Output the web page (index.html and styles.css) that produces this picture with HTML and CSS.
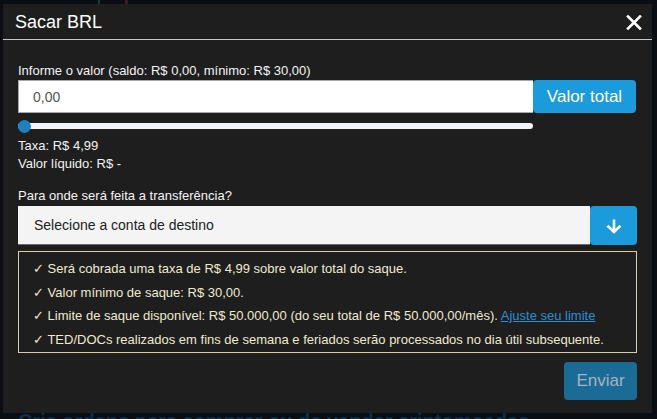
FILE: index.html
```html
<!DOCTYPE html>
<html>
    <head>
        <title>Sacar BRL</title>
        <link rel="stylesheet" href="styles.css">
    </head>
    <body>
        <div class='page'>
            <div class='chartStrip'></div>
            <h2 class='pageTitle'>Crie ordens para comprar ou de vender criptomoedas</h2>
        </div>

        <div class='modal'>
            <div class='modalHeader'>
                <span class='modalTitle'>Sacar BRL</span>
                <svg class='closeIcon' width='16' height='15' viewBox='0 0 16 15'>
                    <path d='M2 1.5 L14 13.5 M14 1.5 L2 13.5' stroke='#fff' stroke-width='2.6' stroke-linecap='square'/>
                </svg>
            </div>

            <div class='modalBody'>
                <div class='fieldLabel'>Informe o valor (saldo: R$ 0,00, mínimo: R$ 30,00)</div>
                <div class='amountRow'>
                    <div class='amountInput'>0,00</div>
                    <div class='btnBlue btnTotal'>Valor total</div>
                </div>
                <div class='slider'>
                    <div class='sliderTrack'></div>
                    <div class='sliderThumb'></div>
                </div>
                <div class='summary'>
                    <div>Taxa: R$ 4,99</div>
                    <div>Valor líquido: R$ -</div>
                </div>

                <div class='fieldLabel destLabel'>Para onde será feita a transferência?</div>
                <div class='destRow'>
                    <div class='destSelect'>Selecione a conta de destino</div>
                    <div class='btnBlue btnArrow'>
                        <svg width='18' height='16' viewBox='0 0 18 16'>
                            <path d='M9 1.5 V14 M2.5 7.8 L9 14 L15.5 7.8' stroke='#fff' stroke-width='2.6' fill='none'/>
                        </svg>
                    </div>
                </div>

                <div class='notes'>
                    <div>✓ Será cobrada uma taxa de R$ 4,99 sobre valor total do saque.</div>
                    <div>✓ Valor mínimo de saque: R$ 30,00.</div>
                    <div>✓ Limite de saque disponível: R$ 50.000,00 (do seu total de R$ 50.000,00/mês). <a href='#'>Ajuste seu limite</a></div>
                    <div>✓ TED/DOCs realizados em fins de semana e feriados serão processados no dia útil subsequente.</div>
                </div>

                <div class='footer'>
                    <div class='btnSend'>Enviar</div>
                </div>
            </div>
        </div>
    </body>
</html>
```

FILE: styles.css
```css
body
{
    margin: 0px;
    background-color: #0a0d12;
    font-family: "Liberation Sans", Arial, sans-serif;
    overflow: hidden;
}

.page
{
    width: 657px;
    height: 419px;
}

.chartStrip
{
    height: 4px;
    margin-left: 48px;
    width: 110px;
    background: linear-gradient(90deg, #0a0d12 0px, #0a0d12 50px, #1b3a2a 50px, #1b3a2a 52px, #0a0d12 52px, #0a0d12 77px, #3a1a1e 77px, #3a1a1e 80px, #0a0d12 80px);
}

.pageTitle
{
    margin: 406px 0px 0px 18px;
    font-size: 20px;
    font-weight: bold;
    color: #0c2f4a;
    white-space: nowrap;
}

.modal
{
    position: fixed;
    left: 3px;
    top: 4px;
    width: 649px;
    height: 409px;
    background-color: #1e1e1e;
    color: #f2f2f2;
}

.modalHeader
{
    height: 35px;
    border-bottom: 1px solid #c8c8c8;
    display: flex;
    align-items: center;
    justify-content: space-between;
    padding: 0px 10px 0px 12px;
}

.modalTitle
{
    font-size: 18px;
    color: #fff;
    margin-top: 2px;
}

.closeIcon
{
    margin-top: 1px;
}

.modalBody
{
    padding: 23px 15px 0px 15px;
    font-size: 13px;
}

.fieldLabel
{
    line-height: 15px;
    margin-bottom: 2px;
    color: #f4f4f4;
}

.amountRow
{
    display: flex;
    height: 33px;
}

.amountInput
{
    width: 500px;
    background-color: #fff;
    border: 1px solid #a9a9a9;
    border-right: none;
    padding-left: 14px;
    display: flex;
    align-items: center;
    font-size: 14px;
    color: #555;
}

.btnBlue
{
    background-color: #1b9bdb;
    color: #fff;
    border-radius: 4px;
    display: flex;
    align-items: center;
    justify-content: center;
}

.btnTotal
{
    width: 103px;
    font-size: 17px;
}

.slider
{
    position: relative;
    width: 515px;
    height: 13px;
    margin-top: 7px;
}

.sliderTrack
{
    position: relative;
    top: 3px;
    height: 6px;
    border-radius: 3px;
    background-color: #f3f4f9;
}

.sliderThumb
{
    position: absolute;
    left: 0px;
    top: 0px;
    width: 13px;
    height: 13px;
    border-radius: 50%;
    background-color: #1d80c0;
}

.summary
{
    margin-top: 4px;
    line-height: 18px;
}

.destLabel
{
    margin-top: 15px;
    margin-bottom: 3px;
}

.destRow
{
    display: flex;
    height: 39px;
}

.destSelect
{
    width: 556px;
    background-color: #f4f4f4;
    border-bottom: 1px solid #6a6a6a;
    padding-left: 16px;
    display: flex;
    align-items: center;
    font-size: 14px;
    color: #222;
}

.btnArrow
{
    width: 47px;
}

.notes
{
    margin-top: 6px;
    border: 1px solid #d6d0a6;
    padding: 5px 14px 1px 14px;
    line-height: 23.5px;
    color: #efeacf;
}

.notes a
{
    color: #2d8fd0;
}

.footer
{
    display: flex;
    justify-content: flex-end;
    margin-top: 9px;
}

.btnSend
{
    width: 73px;
    height: 38px;
    border-radius: 4px;
    background-color: #1a6b96;
    color: #a9b4bb;
    font-size: 17px;
    display: flex;
    align-items: center;
    justify-content: center;
}
```
